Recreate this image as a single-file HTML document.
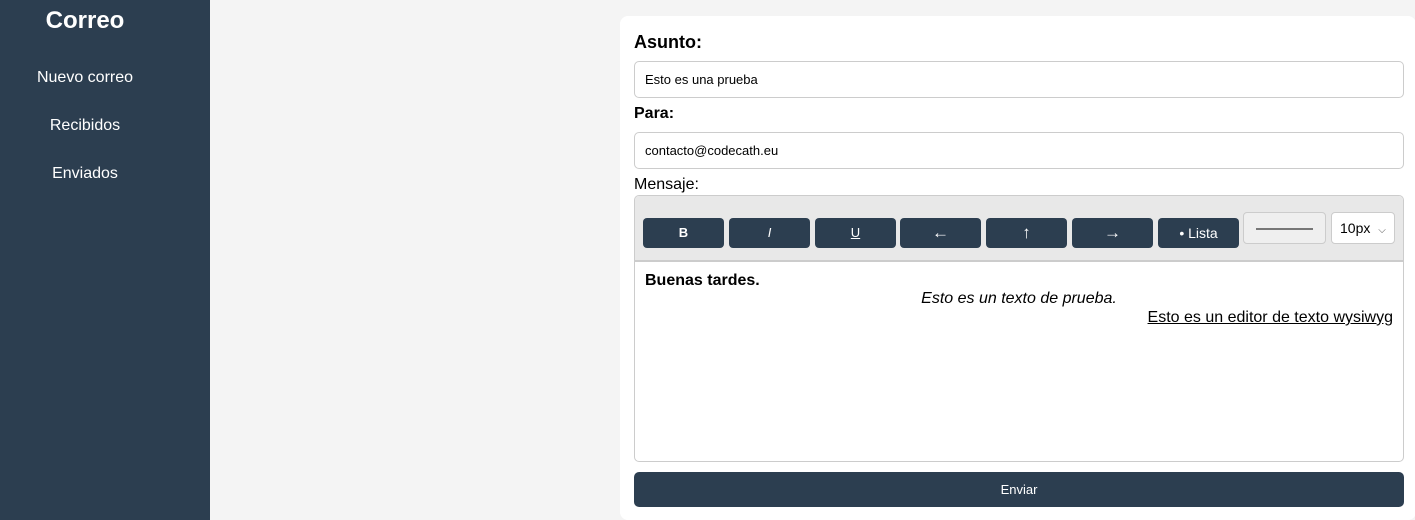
<!DOCTYPE html>
<html><head><meta charset="utf-8"><style>
*{box-sizing:border-box;margin:0;padding:0}
body{width:1415px;height:520px;overflow:hidden;background:#f4f4f4;font-family:"Liberation Sans",Arial,sans-serif;position:relative}
.side{position:absolute;left:0;top:0;width:210px;height:520px;background:#2c3e50;color:#fff;text-align:center}
.side h1{position:absolute;left:0;width:170px;top:7px;font-size:24px;font-weight:bold}
.side a{position:absolute;left:0;width:170px;font-size:16px;color:#fff}
.card{position:absolute;left:620px;top:16px;width:796px;height:504px;background:#fff;border-radius:8px}
.abs{position:absolute}
.lbl{font-weight:bold;color:#000}
.inp{position:absolute;left:14px;width:770px;height:37px;border:1px solid #ccc;border-radius:5px;font-size:13px;padding:10px 10px;color:#000}
.ed{position:absolute;left:14px;top:179px;width:770px;height:267px;border:1px solid #ccc;border-radius:5px;overflow:hidden}
.tb{position:absolute;left:0;top:0;width:100%;height:66px;background:#e8e8e8;border-bottom:2px solid #ccc}
.b{position:absolute;top:22px;width:81px;height:30px;background:#2c3e50;color:#fff;border-radius:4px;font-size:13px;text-align:center;line-height:30px}
.ar{font-size:17px;line-height:29px}
</style></head><body>
<div class="side">
<h1>Correo</h1>
<a style="top:69px">Nuevo correo</a>
<a style="top:117px">Recibidos</a>
<a style="top:165px">Enviados</a>
</div>
<div class="card">
<div class="abs lbl" style="left:14px;top:16px;font-size:18px">Asunto:</div>
<div class="inp" style="top:45px">Esto es una prueba</div>
<div class="abs lbl" style="left:14px;top:89px;font-size:16px">Para:</div>
<div class="inp" style="top:116px">contacto@codecath.eu</div>
<div class="abs" style="left:14px;top:160px;font-size:16px">Mensaje:</div>
<div class="ed">
<div class="tb">
<div class="b" style="left:8px;font-weight:bold">B</div>
<div class="b" style="left:94px;font-style:italic">I</div>
<div class="b" style="left:180px;text-decoration:underline">U</div>
<div class="b ar" style="left:265px">←</div>
<div class="b ar" style="left:351px">↑</div>
<div class="b ar" style="left:437px">→</div>
<div class="b" style="left:523px;font-size:14px">• Lista</div>
<div class="abs" style="left:608px;top:16px;width:83px;height:32px;border:1px solid #ccc;border-radius:4px;background:#efefef"><div style="position:absolute;left:12px;right:12px;top:15px;height:2px;background:#777"></div></div>
<div class="abs" style="left:696px;top:16px;width:64px;height:32px;border:1px solid #ccc;border-radius:4px;background:#fff;font-size:14px;padding:7px 0 0 8px">10px <span style="font-size:10px;color:#555;margin-left:4px">⌵</span></div>
</div>
<div class="abs" style="left:10px;top:76px;font-size:16px;font-weight:bold">Buenas tardes.</div>
<div class="abs" style="left:0;width:100%;text-align:center;top:94px;font-size:16px;font-style:italic">Esto es un texto de prueba.</div>
<div class="abs" style="right:10px;top:113px;font-size:16px;text-decoration:underline">Esto es un editor de texto wysiwyg</div>
</div>
<div class="abs" style="left:14px;top:456px;width:770px;height:35px;background:#2c3e50;color:#fff;border-radius:5px;text-align:center;line-height:35px;font-size:13px">Enviar</div>
</div>
</body></html>
